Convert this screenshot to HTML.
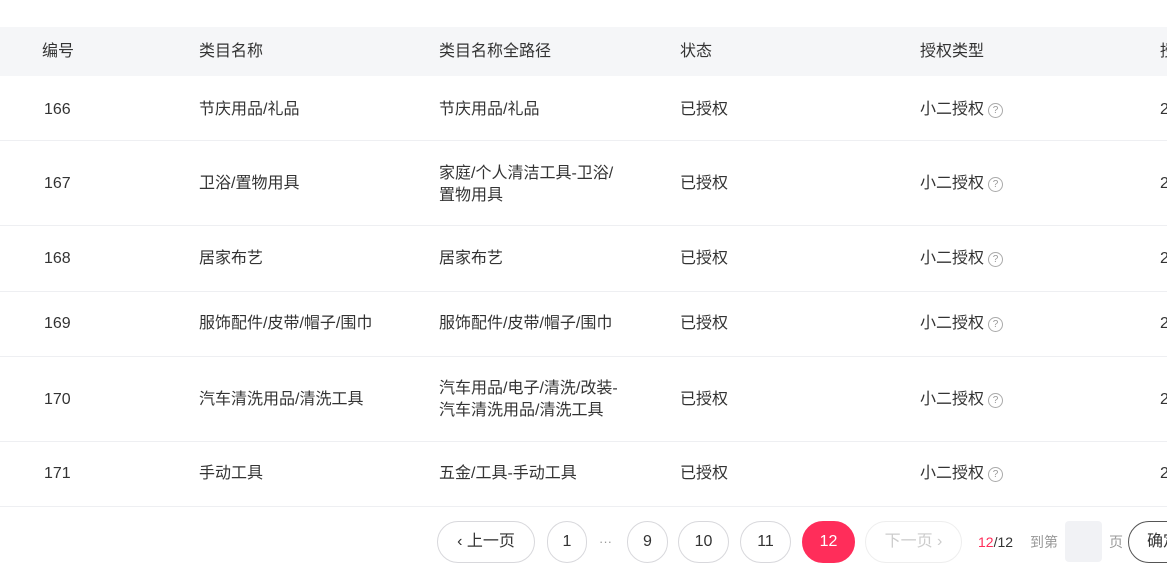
<!DOCTYPE html><html><head><meta charset="utf-8"><style>
body{margin:0;width:1167px;height:579px;background:#fff;position:relative;overflow:hidden;font-family:"Liberation Sans","Noto Sans CJK SC",sans-serif;font-size:16px;line-height:20px;color:#333}
.a{position:absolute;white-space:nowrap;line-height:20px}
.hd{position:absolute;left:0;top:27px;width:1167px;height:49px;background:#f5f6f8}
.ln{position:absolute;left:0;width:1167px;height:1px;background:#eeeff2}
.q{display:inline-block;width:13px;height:13px;border:1px solid #aaa;border-radius:50%;font-size:10px;line-height:13px;text-align:center;color:#999;vertical-align:1px;margin-left:4px}
.b{position:absolute;top:521px;height:40px;border:1px solid #d8d8dc;border-radius:21px;text-align:center;line-height:40px;font-size:16px;color:#333;box-sizing:content-box}
.t{line-height:22px}
</style></head><body>
<div class="hd"></div>
<div class="a" style="left:42px;top:42px">编号</div>
<div class="a" style="left:199px;top:42px">类目名称</div>
<div class="a" style="left:439px;top:42px">类目名称全路径</div>
<div class="a" style="left:680px;top:42px">状态</div>
<div class="a" style="left:920px;top:42px">授权类型</div>
<div class="a" style="left:1160px;top:42px">授</div>

<div class="ln" style="top:140px"></div><div class="ln" style="top:225px"></div><div class="ln" style="top:291px"></div><div class="ln" style="top:356px"></div><div class="ln" style="top:441px"></div><div class="ln" style="top:506px"></div>

<div class="a" style="left:44px;top:100px">166</div>
<div class="a" style="left:199px;top:100px">节庆用品/礼品</div>
<div class="a" style="left:439px;top:100px">节庆用品/礼品</div>
<div class="a" style="left:680px;top:100px">已授权</div>
<div class="a" style="left:920px;top:100px">小二授权<span class="q">?</span></div>
<div class="a" style="left:1160px;top:100px">2</div>

<div class="a" style="left:44px;top:174px">167</div>
<div class="a" style="left:199px;top:174px">卫浴/置物用具</div>
<div class="a t" style="left:439px;top:163px">家庭/个人清洁工具-卫浴/<br>置物用具</div>
<div class="a" style="left:680px;top:174px">已授权</div>
<div class="a" style="left:920px;top:174px">小二授权<span class="q">?</span></div>
<div class="a" style="left:1160px;top:174px">2</div>

<div class="a" style="left:44px;top:249px">168</div>
<div class="a" style="left:199px;top:249px">居家布艺</div>
<div class="a" style="left:439px;top:249px">居家布艺</div>
<div class="a" style="left:680px;top:249px">已授权</div>
<div class="a" style="left:920px;top:249px">小二授权<span class="q">?</span></div>
<div class="a" style="left:1160px;top:249px">2</div>

<div class="a" style="left:44px;top:314px">169</div>
<div class="a" style="left:199px;top:314px">服饰配件/皮带/帽子/围巾</div>
<div class="a" style="left:439px;top:314px">服饰配件/皮带/帽子/围巾</div>
<div class="a" style="left:680px;top:314px">已授权</div>
<div class="a" style="left:920px;top:314px">小二授权<span class="q">?</span></div>
<div class="a" style="left:1160px;top:314px">2</div>

<div class="a" style="left:44px;top:390px">170</div>
<div class="a" style="left:199px;top:390px">汽车清洗用品/清洗工具</div>
<div class="a t" style="left:439px;top:378px">汽车用品/电子/清洗/改装-<br>汽车清洗用品/清洗工具</div>
<div class="a" style="left:680px;top:390px">已授权</div>
<div class="a" style="left:920px;top:390px">小二授权<span class="q">?</span></div>
<div class="a" style="left:1160px;top:390px">2</div>

<div class="a" style="left:44px;top:464px">171</div>
<div class="a" style="left:199px;top:464px">手动工具</div>
<div class="a" style="left:439px;top:464px">五金/工具-手动工具</div>
<div class="a" style="left:680px;top:464px">已授权</div>
<div class="a" style="left:920px;top:464px">小二授权<span class="q">?</span></div>
<div class="a" style="left:1160px;top:464px">2</div>

<div class="b" style="left:437px;width:96px">‹ 上一页</div>
<div class="b" style="left:547px;width:38px">1</div>
<div class="a" style="left:599px;top:532px;color:#999;font-size:13px">···</div>
<div class="b" style="left:627px;width:39px">9</div>
<div class="b" style="left:678px;width:49px">10</div>
<div class="b" style="left:740px;width:49px">11</div>
<div class="b" style="left:802px;width:51px;background:#ff2d5a;border-color:#ff2d5a;color:#fff">12</div>
<div class="b" style="left:865px;width:95px;color:#ccc;border-color:#eee">下一页 ›</div>
<div class="a" style="left:978px;top:532px;font-size:14px"><span style="color:#ff2d5a">12</span>/12</div>
<div class="a" style="left:1030px;top:532px;font-size:14px;color:#999">到第</div>
<div class="a" style="left:1065px;top:521px;width:37px;height:41px;background:#f1f2f5;border-radius:4px"></div>
<div class="a" style="left:1109px;top:532px;font-size:14px;color:#999">页</div>
<div class="b" style="left:1128px;width:80px;border-color:#555;text-align:left;padding-left:18px">确定</div>
</body></html>
